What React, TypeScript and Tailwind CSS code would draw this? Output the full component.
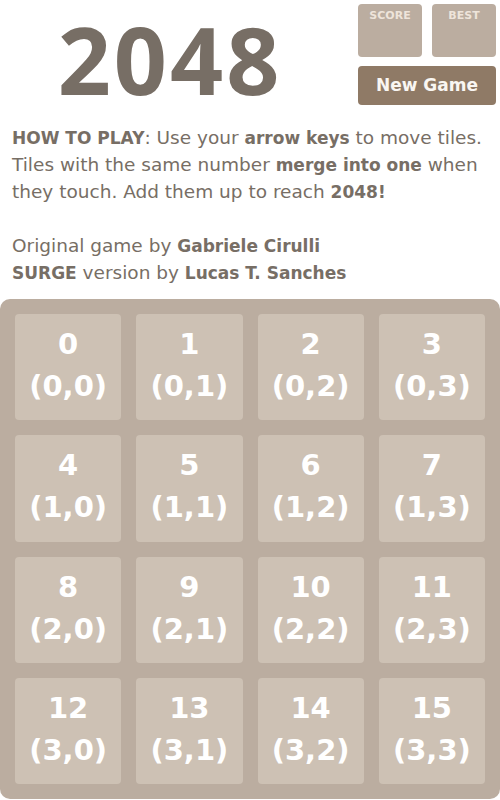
import React from 'react';

const tiles = Array.from({ length: 16 }, (_, i) => ({
  n: i,
  r: Math.floor(i / 4),
  c: i % 4,
}));

const B: React.FC<{ children: React.ReactNode }> = ({ children }) => (
  <strong className="font-bold text-[17px] leading-none">{children}</strong>
);

const App: React.FC = () => {
  return (
    <div className="w-[500px] bg-white text-[#776e65]" style={{ fontFamily: '"DejaVu Sans", "Noto Sans", sans-serif' }}>
      {/* Header */}
      <div className="flex h-[110px]">
        <div className="flex-1 flex items-start justify-center">
          <h1
            className="text-[93px] font-bold leading-[110px] tracking-[3px] pr-[18px] mt-[4px]"
            style={{ fontFamily: '"Open Sans", sans-serif' }}
          >
            2048
          </h1>
        </div>
        <div className="w-[138px] mr-[4px] pt-[4px] flex flex-col gap-[9px]">
          <div className="flex gap-[10px]">
            <div className="w-[64px] h-[53px] rounded-[4px] bg-[#bbada0] text-[#eee4da] text-[11px] font-bold text-center pt-[4px] leading-[16px]">
              SCORE
            </div>
            <div className="w-[64px] h-[53px] rounded-[4px] bg-[#bbada0] text-[#eee4da] text-[11px] font-bold text-center pt-[4px] leading-[16px]">
              BEST
            </div>
          </div>
          <button className="h-[39px] rounded-[4px] bg-[#8f7a66] text-[#f9f6f2] text-[17px] font-bold pt-[1px]">
            New Game
          </button>
        </div>
      </div>

      {/* Intro */}
      <div className="pl-[12px] pr-[8px] pt-[14px] text-[18.5px] leading-[27px]">
        <p>
          <B>HOW TO PLAY</B>: Use your <B>arrow keys</B> to move tiles. Tiles with the same number{' '}
          <B>merge into one</B> when they touch. Add them up to reach <B>2048!</B>
        </p>
        <p className="mt-[27px]">
          Original game by <B>Gabriele Cirulli</B>
          <br />
          <B>SURGE</B> version by <B>Lucas T. Sanches</B>
        </p>
      </div>

      {/* Board */}
      <div className="mt-[13px] w-[500px] h-[500px] rounded-[10px] bg-[#bbada0] p-[15px] grid grid-cols-4 grid-rows-4 gap-[15px]">
        {tiles.map((t) => (
          <div
            key={t.n}
            className="rounded-[4px] bg-[#cdc1b4] text-white font-bold text-[29px] leading-[42px] flex flex-col items-center justify-center pb-[4px]"
          >
            <span>{t.n}</span>
            <span>({t.r},{t.c})</span>
          </div>
        ))}
      </div>
    </div>
  );
};

export default App;
